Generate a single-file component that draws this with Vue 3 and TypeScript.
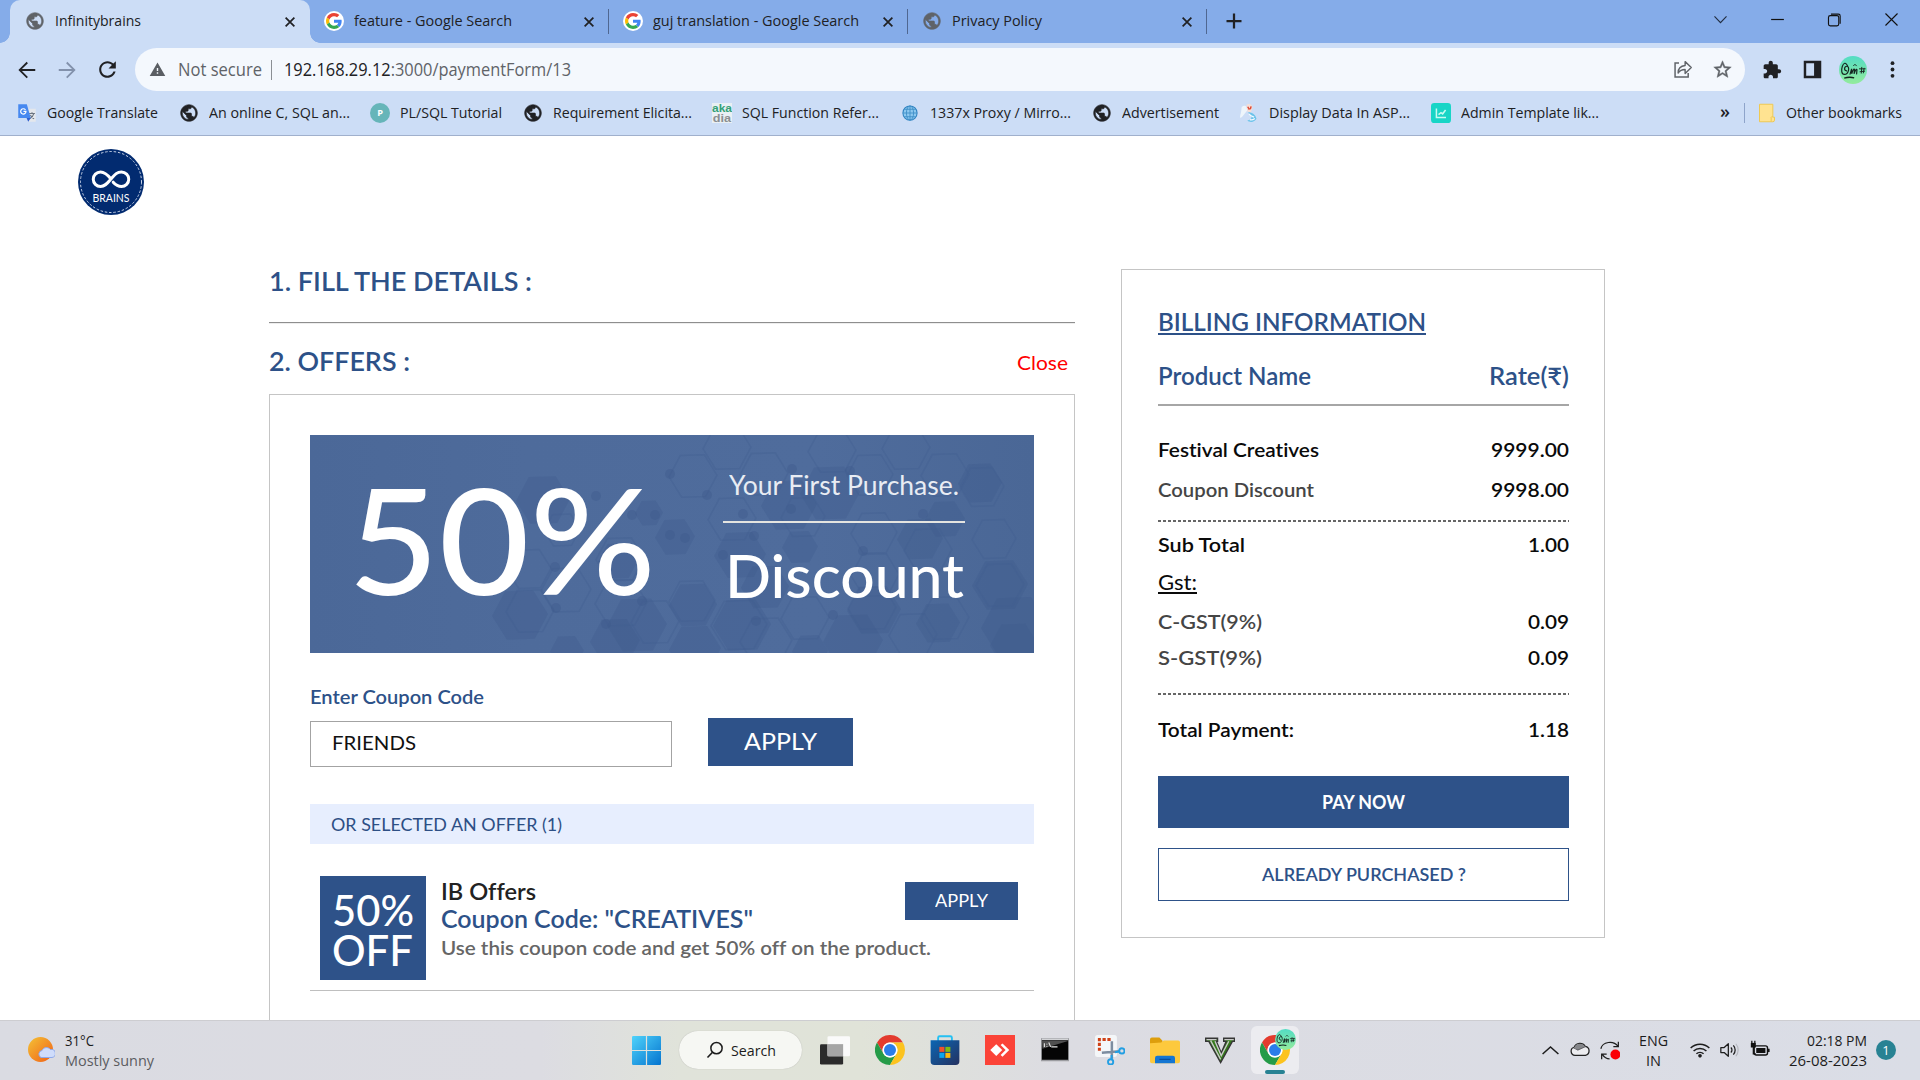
<script setup lang="ts">
type FitEl = HTMLElement

/* Stretches or condenses a line of text so that it takes the given width. */
const vFit = {
  mounted(el: FitEl, binding: { value: number }) {
    const range = document.createRange()
    range.selectNodeContents(el)
    const natural = range.getBoundingClientRect().width
    if (natural > 0) {
      el.style.display = 'inline-block'
      el.style.transformOrigin = '0 50%'
      el.style.transform = `scaleX(${binding.value / natural})`
      el.style.marginRight = `${binding.value - natural}px`
    }
  },
}

const globe =
  '<path d="M12 2C6.48 2 2 6.48 2 12s4.48 10 10 10 10-4.48 10-10S17.52 2 12 2zm-1 17.93c-3.95-.49-7-3.85-7-7.93 0-.62.08-1.21.21-1.79L9 15v1c0 1.1.9 2 2 2v1.93zm6.9-2.54c-.26-.81-1-1.39-1.9-1.39h-1v-3c0-.55-.45-1-1-1H8v-2h2c.55 0 1-.45 1-1V7h2c1.1 0 2-.9 2-2v-.41c2.93 1.19 5 4.06 5 7.41 0 2.08-.8 3.97-2.1 5.39z" fill="currentColor" stroke="currentColor" stroke-width=".7"/>'
const chrome =
  '<path d="M12 6h10.39A12 12 0 0 0 1.6 6l5.2 9A6 6 0 0 1 12 6z" fill="#e33b2e"/><path d="M6.8 15 1.6 6A12 12 0 0 0 12 24l5.2-9A6 6 0 0 1 6.8 15z" fill="#259b48"/><path d="M17.2 15 12 24A12 12 0 0 0 22.39 6H12a6 6 0 0 1 5.2 9z" fill="#fcc31e"/><circle cx="12" cy="12" r="6" fill="#fff"/><circle cx="12" cy="12" r="4.8" fill="#2b7de9"/>'

const icons: Record<string, string> = {
  globe,
  chrome,
  google:
    '<circle cx="12" cy="12" r="12" fill="#fff"/><g transform="translate(2.4 2.4) scale(.4)"><path fill="#EA4335" d="M24 9.5c3.54 0 6.71 1.22 9.21 3.6l6.85-6.85C35.9 2.38 30.47 0 24 0 14.62 0 6.51 5.38 2.56 13.22l7.98 6.19C12.43 13.72 17.74 9.5 24 9.5z"/><path fill="#4285F4" d="M46.98 24.55c0-1.57-.15-3.09-.38-4.55H24v9.02h12.94c-.58 2.96-2.26 5.48-4.78 7.18l7.73 6c4.51-4.18 7.09-10.36 7.09-17.65z"/><path fill="#FBBC05" d="M10.53 28.59A14.5 14.5 0 0 1 9.77 24c0-1.6.27-3.14.76-4.59l-7.98-6.19A23.9 23.9 0 0 0 0 24c0 3.88.92 7.54 2.56 10.78l7.97-6.19z"/><path fill="#34A853" d="M24 48c6.48 0 11.93-2.13 15.89-5.81l-7.73-6c-2.15 1.45-4.92 2.3-8.16 2.3-6.26 0-11.57-4.22-13.47-9.91l-7.98 6.19C6.51 42.62 14.62 48 24 48z"/></g>',
  close: '<path d="M4.500 4.500 19.500 19.500M19.500 4.500 4.500 19.500" stroke="#202124" stroke-width="3" fill="none"/>',
  plus: '<path d="M12 2V22M2 12H22" stroke="#202124" stroke-width="3" fill="none"/>',
  down: '<path d="M3.500 7.500 12 16.500l8.500-9" stroke="#222d40" stroke-width="1.600" fill="none"/>',
  min: '<path d="M3 12H21" stroke="#111" stroke-width="1.700"/>',
  max: '<path d="M7 4.500h10.500a2.500 2.500 0 0 1 2.500 2.500V18" stroke="#111" stroke-width="1.600" fill="none"/><rect x="3.500" y="6.500" width="14.500" height="14.500" rx="2.500" stroke="#111" stroke-width="1.600" fill="none"/>',
  exit: '<path d="M3.500 3.500 20.500 20.500M20.500 3.500 3.500 20.500" stroke="#111" stroke-width="1.600"/>',
  back: '<path d="M21 11H6.500l6.500-6.500L11.600 3.100l-9 8.900 9 8.900 1.400-1.400L6.500 13H21z" fill="currentColor"/>',
  reload:
    '<path d="M17.650 6.350C16.200 4.900 14.210 4 12 4c-4.420 0-7.990 3.580-7.990 8s3.570 8 7.990 8c3.730 0 6.840-2.550 7.730-6h-2.080c-.82 2.330-3.040 4-5.650 4-3.310 0-6-2.690-6-6s2.690-6 6-6c1.660 0 3.140.69 4.220 1.780L13 11h7V4l-2.350 2.350z" fill="#202124"/>',
  warn: '<path d="M1 21h22L12 2 1 21zm12-3h-2v-2h2v2zm0-4h-2v-4h2v4z" fill="#5a5e63"/>',
  share:
    '<path d="M8 4.500H3.500V20.500H18.500V16" stroke="#5f6368" stroke-width="1.700" fill="none"/><path d="M15 3v4.500C9.500 8 7 11.500 7 16c2-3 4.500-4 8-4v4.500L22 9.700z" stroke="#5f6368" stroke-width="1.600" fill="none" stroke-linejoin="round"/>',
  star: '<path d="M22 9.240l-7.190-.62L12 2 9.190 8.630 2 9.240l5.460 4.730L5.820 21 12 17.270 18.180 21l-1.630-7.030L22 9.240zM12 15.400l-3.760 2.270 1-4.280-3.320-2.880 4.380-.38L12 6.100l1.710 4.040 4.380.38-3.320 2.880 1 4.280L12 15.400z" fill="#5f6368" stroke="#5f6368" stroke-width=".5"/>',
  puzzle:
    '<path d="M20.500 11H19V7c0-1.100-.9-2-2-2h-4V3.500C13 2.120 11.880 1 10.500 1S8 2.120 8 3.500V5H4c-1.100 0-1.990.9-1.990 2v3.800H3.500c1.490 0 2.700 1.210 2.700 2.700s-1.210 2.700-2.700 2.700H2V20c0 1.100.9 2 2 2h3.800v-1.500c0-1.490 1.210-2.700 2.700-2.700 1.490 0 2.700 1.210 2.700 2.700V22H17c1.100 0 2-.9 2-2v-4h1.500c1.380 0 2.500-1.120 2.500-2.500S21.880 11 20.500 11z" fill="#202124"/>',
  panel: '<path d="M2 2h20v20H2zM4.800 4.800v14.400h9V4.800z" fill="#202124" fill-rule="evenodd"/>',
  dots: '<circle cx="12" cy="4" r="2.400" fill="#202124"/><circle cx="12" cy="12" r="2.400" fill="#202124"/><circle cx="12" cy="20" r="2.400" fill="#202124"/>',
  avatar:
    '<defs><linearGradient id="av" x1="0" y1="0" x2="0" y2="1"><stop offset="0" stop-color="#53dcc4"/><stop offset="1" stop-color="#93eb9c"/></linearGradient></defs><circle cx="12" cy="12" r="12" fill="url(#av)"/><path d="M7.500 9C4-.0 -.5 15.800 4.500 15.800c4 0 5-7 2.200-7-2.200 0-2.800 3.600-.2 4M9.500 15.500l1.300-4.500.1 4.200c.8-2.900 2.200-4.900 2.400-3.700l-.4 3.800c1-2.900 2.100-4.700 2.500-3.500l-.3 3.500" stroke="#15241f" stroke-width="1" fill="none" stroke-linecap="round"/><path d="M4.500 19c3-.9 6-.9 8.500-.2" stroke="#15241f" stroke-width="1.200" fill="none"/><path d="M12.500 8.300l1.200-1.200 1.200 1.300M17.500 11h5M19.500 9.700l-.4 5M21.500 10.500l-.6 4M18 13.500l4-.5" stroke="#15241f" stroke-width=".8" fill="none" stroke-linecap="round"/>',
  translate:
    '<path d="M10 7h12.500v15.500H14z" fill="#e4e7ec"/><path d="M14.500 12.500h7M18 11v1.500M20 13c-.7 3-3 5-5 6M16 14.500c1 2 2.500 3.500 4.500 4.500" stroke="#6b7480" stroke-width="1.300" fill="none"/><path d="M1.500 1.500h10.300l4.700 16.500h-15z" fill="#4688f0"/><path d="M11.500 18h5l-3 4.500z" fill="#3060cf"/><path d="M10.200 8.200A3.200 3.200 0 1 0 10.800 10H7.800" stroke="#fff" stroke-width="1.400" fill="none"/>',
  pCircle: '<circle cx="12" cy="12" r="12" fill="#66b5b9"/><text x="12" y="16" text-anchor="middle" font-family="Open Sans, sans-serif" font-weight="700" font-size="11" fill="#fff">P</text>',
  aka: '<rect width="24" height="24" fill="#e9f0f4"/><text x="0" y="10.500" font-family="Liberation Sans, sans-serif" font-weight="700" font-size="14" fill="#34a178" textLength="24" lengthAdjust="spacingAndGlyphs">aka</text><text x="1" y="22.500" font-family="Liberation Sans, sans-serif" font-weight="700" font-size="13" fill="#8b8f92" textLength="22" lengthAdjust="spacingAndGlyphs">dia</text>',
  world:
    '<circle cx="12" cy="12" r="8.500" fill="#8cc8ef" stroke="#2f83c1" stroke-width="1.300"/><path d="M3.500 12h17M12 3.500v17M5 7.500h14M5 16.500h14" stroke="#3f8fc8" stroke-width="1.100"/><ellipse cx="12" cy="12" rx="4.300" ry="8.500" fill="none" stroke="#3f8fc8" stroke-width="1.100"/>',
  figure:
    '<path d="M3 6c0-3 5-4 6-1l1 4c-3 3-5 7-8 9C0 17 3 12 3 6z" fill="#eef5fb"/><path d="M9 2c4-2 7 0 7 4l-2 6-4-2z" fill="#f5ddd6"/><path d="M10.500 4.500 12.500 8M14.500 4l-1 3.500" stroke="#dd4a36" stroke-width="1.800"/><path d="M11 11c5 0 9 3 10 8-2 4-8 5-11 2 3-1 5-2 5-4s-3-3-4-6z" fill="#6cc3ea"/><path d="M12 13c2 3 4 3 6 4M13 20c2 .5 4 0 6-1.500" stroke="#f3fafe" stroke-width="1.500" fill="none"/>',
  chart: '<rect width="24" height="24" rx="4" fill="#18d5c6"/><path d="M6.500 6.500v11h11.500M9 14l3-2.500 2 1.500 3.500-4.500" stroke="#c8fbf2" stroke-width="1.800" fill="none"/>',
  folderS: '<path d="M3 1.500h16V17h2v3.500a2 2 0 0 1-2 2H3z" fill="#ffe391"/><path d="M3 1.500h16V17h2v3.500a2 2 0 0 1-2 2H3zM17 22v-4a1 1 0 0 1 2-1" stroke="#efc953" stroke-width="1.200" fill="none"/>',
  weather:
    '<defs><linearGradient id="sun" x1="0" y1="0" x2="1" y2="1"><stop offset="0" stop-color="#f4c236"/><stop offset="1" stop-color="#f05f16"/></linearGradient></defs><circle cx="12.500" cy="12.500" r="12.500" fill="url(#sun)"/><path d="M13 20.500a3.700 3.700 0 0 1 1-7 5 5 0 0 1 8.500-1 4 4 0 0 1 1.500 8z" fill="#cfdcfb" stroke="#8fa9ea" stroke-width="1"/>',
  windows:
    '<defs><linearGradient id="wn" x1="0" y1="0" x2="1" y2="1"><stop offset="0" stop-color="#4fd3fb"/><stop offset="1" stop-color="#0474cf"/></linearGradient></defs><path d="M0 1a1 1 0 0 1 1-1h10.500v11.500H0zM12.500 0H23a1 1 0 0 1 1 1v10.500H12.500zM0 12.500h11.500V24H1a1 1 0 0 1-1-1zM12.500 12.500H24V23a1 1 0 0 1-1 1H12.500z" fill="url(#wn)"/>',
  search: '<circle cx="14" cy="9.500" r="7.500" stroke="#1c1c1c" stroke-width="2" fill="none"/><path d="M8.700 15 2 22" stroke="#1c1c1c" stroke-width="2.200"/>',
  taskview:
    '<rect x="0" y="7.300" width="18.500" height="16.200" rx="1" fill="#2b2b2b"/><rect x="6" y="1" width="18" height="16" rx="1" fill="#fafafa"/><rect x="6" y="7.300" width="12.500" height="9.700" fill="#a5a5a5"/>',
  store:
    '<path d="M6.500 6V2.200A1.200 1.200 0 0 1 7.700 1h8.600a1.200 1.200 0 0 1 1.200 1.200V6" stroke="#25c0f2" stroke-width="1.500" fill="none"/><defs><linearGradient id="st" x1="0" y1="0" x2="1" y2="1"><stop offset="0" stop-color="#0b66b4"/><stop offset="1" stop-color="#253260"/></linearGradient></defs><path d="M.5 4.200h23V21a3 3 0 0 1-3 3h-17a3 3 0 0 1-3-3z" fill="url(#st)"/><path d="M7.500 9.500h4v4h-4z" fill="#f1512a"/><path d="M12.300 9.500h4v4h-4z" fill="#80bb10"/><path d="M7.500 14.300h4v4h-4z" fill="#0aa5ee"/><path d="M12.300 14.300h4v4h-4z" fill="#fdb90b"/>',
  anydesk: '<rect width="24" height="24" fill="#fb4338"/><path d="M9 7.300 13.800 12 9 16.700 4.200 12z" fill="#fff"/><path d="M12.500 8 14 6.700 19.400 12 14 17.300 12.500 16l4-4z" fill="#fff"/>',
  cmd: '<rect x=".8" y="2.500" width="22.400" height="18.500" fill="#9c9da1"/><rect x="1.500" y="3.800" width="21" height="16" fill="#050505"/><path d="M1.500 4.800h21L2 11z" fill="#505050"/><path d="M1.500 2.900h21v1.300h-21z" fill="#d2d3d6"/><path d="M3.500 6.500v3M5.500 7v.5M5.500 9v.5M7 6l1.500 3.500M9 9.500h5" stroke="#e4e4e4" stroke-width=".9"/>',
  snip: '<rect x="0" y="0" width="17.500" height="17.500" rx="2" fill="#f4f6f8"/><path d="M12.500 3.500h-9v9" stroke="#cf4117" stroke-width="2.400" stroke-dasharray="2.600 1.300" fill="none"/><path d="M13.500 5v14M5.500 14.200 20 13" stroke="#7d8da0" stroke-width="2"/><circle cx="21.500" cy="12.700" r="2.100" stroke="#239fe3" stroke-width="1.500" fill="none"/><circle cx="12.500" cy="21.500" r="2.100" stroke="#239fe3" stroke-width="1.500" fill="none"/><path d="M16 13.800l4-.8M13.300 16v4" stroke="#239fe3" stroke-width="1.600"/>',
  folder:
    '<path d="M0 3.500A1.500 1.500 0 0 1 1.500 2H7.500l2.500 2.500V8H0z" fill="#dd9e0c"/><path d="M0 6.500 9 6l2-1.700h11.500A1.500 1.500 0 0 1 24 5.800V21a1.500 1.500 0 0 1-1.500 1.500h-21A1.500 1.500 0 0 1 0 21z" fill="#fdc93d"/><path d="M4 22.500v-4.200A1.800 1.800 0 0 1 5.800 16.500h12.400a1.800 1.800 0 0 1 1.800 1.800v4.200z" fill="#1576d2"/><path d="M7.500 19.500h9" stroke="#0a4f9d" stroke-width="1"/>',
  vim: '<path d="M.5 2.500H10V5H9l4 9.500L17 5h-2V2.500h8.500V5H22L12.500 22 3 5H.5z" fill="#347a1b" stroke="#363636" stroke-width="1.200"/><path d="M1.200 3.700h8M15.500 3.700h7.500M4.500 4.500l8 15M8 5l5 11.500L19 5" stroke="#c9c9c9" stroke-width="1.100" fill="none"/>',
  up: '<path d="M2 16.500 12 7.500l10 9" stroke="#1d1d1d" stroke-width="1.900" fill="none"/>',
  cloud: '<path d="M6 18.500a5 5 0 0 1-1-9.800 7.500 7.500 0 0 1 13.300-1A5.500 5.500 0 0 1 18.500 18.500z" fill="#ededf0" stroke="#222" stroke-width="1.500"/><path d="M5 9a7.500 7.500 0 0 1 13.300-1l-9 4.500z" fill="#85868a"/><path d="M4 9.500 9.500 12 19 7.800" stroke="#55565a" stroke-width="1" fill="none"/>',
  sync: '<path d="M1 10.500C3 2 16 0 21.500 7.500M22 2v6h-6M2 23v-6h6M3 17.500c2 3 5 5 8.500 5" stroke="#1d1d1d" stroke-width="1.500" fill="none"/><circle cx="18.500" cy="17.500" r="6" fill="#fb0006"/>',
  wifi: '<path d="M.8 9.700a16 16 0 0 1 22.400 0M4.300 13.300a11 11 0 0 1 15.400 0M7.700 16.600a6.200 6.200 0 0 1 8.600 0" stroke="#1d1d1d" stroke-width="1.800" fill="none"/><circle cx="12" cy="19" r="2.200" fill="#1d1d1d"/>',
  speaker: '<path d="M1 9h4l5-4.500v15L5 15H1z" stroke="#1d1d1d" stroke-width="1.500" fill="none" stroke-linejoin="round"/><path d="M13 9a4 4 0 0 1 0 6M16 6.500a8 8 0 0 1 0 11" stroke="#1d1d1d" stroke-width="1.500" fill="none"/><path d="M19 4.500a11.500 11.500 0 0 1 0 15" stroke="#b4b6bd" stroke-width="1.300" fill="none"/>',
  battery: '<rect x="5" y="7" width="16" height="11" rx="2.500" stroke="#111" stroke-width="1.700" fill="none"/><path d="M7.500 9.500h11v6h-11zM21.500 10.500h2v4h-2z" fill="#111"/><path d="M1 3.500h6v5.500H1z" fill="#111"/><path d="M2.200 1v3M5.800 1v3M4 8.500v8h3" stroke="#111" stroke-width="1.500" fill="none"/>',
}

const tabs = [
  { icon: 'globe', label: 'Infinitybrains', w: 86 },
  { icon: 'google', label: 'feature - Google Search', w: 158 },
  { icon: 'google', label: 'guj translation - Google Search', w: 206 },
  { icon: 'globe', label: 'Privacy Policy', w: 90 },
]

const bookmarks = [
  { icon: 'translate', label: 'Google Translate', w: 111 },
  { icon: 'globe', label: 'An online C, SQL an...', w: 141 },
  { icon: 'pCircle', label: 'PL/SQL Tutorial', w: 102 },
  { icon: 'globe', label: 'Requirement Elicita...', w: 139 },
  { icon: 'aka', label: 'SQL Function Refer...', w: 137 },
  { icon: 'world', label: '1337x Proxy / Mirro...', w: 141 },
  { icon: 'globe', label: 'Advertisement', w: 97 },
  { icon: 'figure', label: 'Display Data In ASP...', w: 141 },
  { icon: 'chart', label: 'Admin Template lik...', w: 138 },
]

const windowButtons = ['down', 'min', 'max', 'exit']
const taskIcons = ['taskview', 'chrome', 'store', 'anydesk', 'cmd', 'snip', 'folder', 'vim']

/* Flat-top hexagons of the banner: centre x, centre y, radius. */
const solidHexes = [
  [233, 65, 27], [339, 78, 14], [365, 102, 20], [308, 126, 20], [210, 180, 28], [327, 190, 30], [305, 206, 25],
  [432, 190, 29], [383, 170, 24], [479, 70, 28], [520, 58, 30], [490, 112, 18], [430, 120, 26], [610, 104, 23],
  [635, 84, 20], [670, 48, 22], [564, 175, 27], [543, 206, 30], [628, 188, 22], [690, 150, 28], [705, 192, 34],
  [257, 216, 17], [385, 214, 26], [500, 216, 18], [704, 210, 24], [455, 152, 24],
]
const lineHexes = [
  [417, 13, 24], [383, 41, 24], [454, 39, 24], [522, 16, 24], [596, 13, 24], [560, 40, 23], [635, 40, 24],
  [672, 52, 22], [564, 98, 23], [422, 84, 24], [565, 140, 24], [493, 82, 22], [618, 115, 24], [684, 104, 22],
  [219, 134, 22], [256, 155, 25], [220, 176, 24], [382, 166, 23], [345, 187, 24], [311, 168, 26], [310, 124, 24],
  [252, 95, 18], [429, 190, 28], [495, 183, 24], [456, 206, 26], [562, 173, 24], [603, 200, 24], [635, 183, 24], [690, 150, 24],
]
const dots = [
  [360, 39, 5], [482, 34, 5], [540, 36, 5], [433, 79, 5], [397, 60, 5], [286, 61, 5], [345, 80, 5], [322, 80, 5],
  [360, 100, 5], [375, 103, 5], [245, 132, 5], [246, 173, 5], [296, 189, 5], [332, 166, 5], [413, 120, 5],
  [523, 180, 5], [553, 116, 5], [613, 79, 5], [444, 101, 5], [446, 186, 5], [481, 74, 5],
]
const hex = ([cx, cy, r]: number[]) =>
  [0, 1, 2, 3, 4, 5]
    .map((i) => {
      const a = ((i * 60 - 2) * Math.PI) / 180
      return `${(cx + r * Math.cos(a)).toFixed(1)},${(cy + r * Math.sin(a)).toFixed(1)}`
    })
    .join(' ')
</script>

<template>
  <div class="screen">
    <div class="strip">
      <div v-for="(tab, i) in tabs" :key="tab.label" class="tab" :class="{ active: i === 0 }">
        <svg class="fav" viewBox="0 0 24 24" v-html="icons[tab.icon]" />
        <span class="tab-label"><span v-fit="tab.w">{{ tab.label }}</span></span>
        <svg class="tab-close" viewBox="0 0 24 24" v-html="icons.close" />
      </div>
      <svg class="new-tab" viewBox="0 0 24 24" v-html="icons.plus" />
      <div class="win-buttons">
        <span v-for="b in windowButtons" :key="b" class="win-button">
          <svg viewBox="0 0 24 24" v-html="icons[b]" />
        </span>
      </div>
    </div>

    <div class="toolbar">
      <svg class="nav" viewBox="0 0 24 24" v-html="icons.back" />
      <svg class="nav forward" viewBox="0 0 24 24" v-html="icons.back" />
      <svg class="nav reload" viewBox="0 0 24 24" v-html="icons.reload" />
      <div class="omnibox">
        <svg class="warn" viewBox="0 0 24 24" v-html="icons.warn" />
        <span class="insecure"><span v-fit="84">Not secure</span></span>
        <i class="omni-sep" />
        <span class="url"><span v-fit="287"><b>192.168.29.12</b>:3000/paymentForm/13</span></span>
        <svg class="share" viewBox="0 0 24 24" v-html="icons.share" />
        <svg class="star" viewBox="0 0 24 24" v-html="icons.star" />
      </div>
      <svg class="ext" viewBox="0 0 24 24" v-html="icons.puzzle" />
      <svg class="panel" viewBox="0 0 24 24" v-html="icons.panel" />
      <svg class="avatar" viewBox="0 0 24 24" v-html="icons.avatar" />
      <svg class="dots" viewBox="0 0 24 24" v-html="icons.dots" />
    </div>

    <div class="bookmarks">
      <div v-for="b in bookmarks" :key="b.label" class="bookmark">
        <svg class="bm-icon" viewBox="0 0 24 24" v-html="icons[b.icon]" />
        <span class="bm-label"><span v-fit="b.w">{{ b.label }}</span></span>
      </div>
      <span class="more">»</span>
      <i class="bm-sep" />
      <svg class="bm-icon" viewBox="0 0 24 24" v-html="icons.folderS" />
      <span class="other"><span v-fit="116">Other bookmarks</span></span>
    </div>

    <main class="page">
      <header class="page-head">
        <svg class="logo" viewBox="0 0 66 66">
          <circle cx="33" cy="33" r="33" fill="#022b70" />
          <circle cx="33" cy="33" r="30.500" fill="none" stroke="#c9d4e8" stroke-width="1" stroke-dasharray="2.500 1.800" />
          <path
            d="M33 30c-4-5-6.500-7-10.500-7a7 7 0 0 0 0 14.500c5 0 7-3.500 10.500-7.500s5.500-7 10.500-7a7 7 0 0 1 0 14.500c-4 0-6-1.700-8.300-4.300"
            fill="none" stroke="#fff" stroke-width="3" stroke-linecap="round"
          />
          <text x="14.500" y="52.500" font-size="10.500" textLength="37" lengthAdjust="spacingAndGlyphs" fill="#fff">BRAINS</text>
        </svg>
      </header>

      <div class="columns">
        <section class="left">
          <h2 class="step"><span v-fit="263">1. FILL THE DETAILS :</span></h2>
          <hr />
          <div class="offers-head">
            <h2 class="step"><span v-fit="141">2. OFFERS :</span></h2>
            <a class="close"><span v-fit="51">Close</span></a>
          </div>
          <div class="offers">
            <div class="banner">
              <svg class="pattern" viewBox="0 0 724 218">
                <g fill="#3f5b8c" fill-opacity=".32">
                  <polygon v-for="(p, i) in solidHexes" :key="i" :points="hex(p)" />
                </g>
                <g fill="none" stroke="#425e90" stroke-opacity=".38" stroke-width="1.500">
                  <polygon v-for="(p, i) in lineHexes" :key="i" :points="hex(p)" />
                </g>
                <g fill="#3f5b8c" fill-opacity=".4">
                  <circle v-for="(p, i) in dots" :key="i" :cx="p[0]" :cy="p[1]" :r="p[2]" />
                </g>
              </svg>
              <div class="percent"><span v-fit="308">50%</span></div>
              <div class="pitch">
                <div class="first"><span v-fit="230">Your First Purchase.</span></div>
                <div class="discount"><span v-fit="239">Discount</span></div>
              </div>
            </div>

            <div class="label"><span v-fit="174">Enter Coupon Code</span></div>
            <div class="form">
              <div class="field"><span v-fit="84">FRIENDS</span></div>
              <div class="button big"><span v-fit="73">APPLY</span></div>
            </div>

            <div class="bar"><span v-fit="231">OR SELECTED AN OFFER (1)</span></div>

            <div class="offer">
              <div class="tile">
                <div><span v-fit="82">50%</span></div>
                <div><span v-fit="81">OFF</span></div>
              </div>
              <div class="offer-text">
                <div class="o1"><span v-fit="95">IB Offers</span></div>
                <div class="o2"><span v-fit="312">Coupon Code: "CREATIVES"</span></div>
                <div class="o3"><span v-fit="490">Use this coupon code and get 50% off on the product.</span></div>
              </div>
              <div class="button small"><span v-fit="53">APPLY</span></div>
            </div>
          </div>
        </section>

        <aside class="billing">
          <div class="title"><span v-fit="268">BILLING INFORMATION</span></div>
          <div class="row head"><span v-fit="153">Product Name</span><span v-fit="80">Rate(₹)</span></div>
          <div class="rule" />
          <div class="row r1"><span v-fit="161">Festival Creatives</span><span v-fit="78">9999.00</span></div>
          <div class="row r2"><span v-fit="156" class="soft">Coupon Discount</span><span v-fit="78">9998.00</span></div>
          <div class="dash d1" />
          <div class="row r3"><span v-fit="87">Sub Total</span><span v-fit="41">1.00</span></div>
          <div class="row gst"><span v-fit="39">Gst:</span></div>
          <div class="row r4"><span v-fit="104" class="soft">C-GST(9%)</span><span v-fit="41">0.09</span></div>
          <div class="row r5"><span v-fit="104" class="soft">S-GST(9%)</span><span v-fit="41">0.09</span></div>
          <div class="dash d2" />
          <div class="row r6"><span v-fit="136">Total Payment:</span><span v-fit="41">1.18</span></div>
          <div class="pay"><span v-fit="83">PAY NOW</span></div>
          <div class="already"><span v-fit="204">ALREADY PURCHASED ?</span></div>
        </aside>
      </div>
    </main>

    <footer class="taskbar">
      <div class="weather">
        <svg viewBox="0 0 27 26" v-html="icons.weather" />
        <div class="w-text">
          <div><span v-fit="29">31°C</span></div>
          <div class="sub"><span v-fit="89">Mostly sunny</span></div>
        </div>
      </div>
      <svg class="start" viewBox="0 0 24 24" v-html="icons.windows" />
      <div class="pill">
        <svg viewBox="0 0 24 24" v-html="icons.search" />
        <span v-fit="45">Search</span>
      </div>
      <div class="task-icons">
        <span v-for="t in taskIcons" :key="t" class="cell"><svg viewBox="0 0 24 24" v-html="icons[t]" /></span>
        <span class="cell current">
          <svg viewBox="0 0 24 24" v-html="icons.chrome" />
          <svg class="mini" viewBox="0 0 24 24" v-html="icons.avatar" />
          <i class="underline" />
        </span>
      </div>
      <div class="tray">
        <span class="t-cell"><svg class="s16" viewBox="0 0 24 24" v-html="icons.up" /></span>
        <span class="t-cell"><svg viewBox="0 0 24 24" v-html="icons.cloud" /></span>
        <span class="t-cell"><svg viewBox="0 0 24 24" v-html="icons.sync" /></span>
        <div class="lang"><div><span v-fit="29">ENG</span></div><div><span v-fit="15">IN</span></div></div>
        <span class="t-cell"><svg viewBox="0 0 24 24" v-html="icons.wifi" /></span>
        <span class="t-cell"><svg viewBox="0 0 24 24" v-html="icons.speaker" /></span>
        <span class="t-cell"><svg viewBox="0 0 24 24" v-html="icons.battery" /></span>
        <div class="clock"><div><span v-fit="60">02:18 PM</span></div><div><span v-fit="78">26-08-2023</span></div></div>
        <span class="badge">1</span>
      </div>
    </footer>
  </div>
</template>

<style>
body {
  overflow: hidden;
}
</style>

<style scoped>
.screen {
  width: 1920px;
  height: 1080px;
  display: flex;
  flex-direction: column;
  overflow: hidden;
  background: #fff;
  font-family: "Open Sans", "Noto Sans", sans-serif;
  font-size: 15px;
  font-variant-ligatures: none;
  color: #202124;
  white-space: nowrap;
}
svg {
  display: block;
  flex: none;
}
.strip {
  height: 43px;
  flex: none;
  display: flex;
  background: #85ace9;
}
.tab {
  box-sizing: border-box;
  width: 299px;
  display: flex;
  align-items: center;
  padding: 0 13px 2px 14px;
  position: relative;
}
.tab:not(.active)::after {
  content: "";
  position: absolute;
  right: 0;
  top: 9px;
  width: 1px;
  height: 25px;
  background: #4f6791;
}
.tab.active {
  margin-left: 10px;
  width: 300px;
  padding-left: 15px;
  background: #ccddf6;
  border-radius: 10px 10px 0 0;
}
.tab.active::before,
.tab.active::after {
  content: "";
  position: absolute;
  bottom: 0;
  width: 10px;
  height: 10px;
}
.tab.active::before {
  left: -10px;
  background: radial-gradient(circle at 0 0, #85ace9 9.500px, #ccddf6 10px);
}
.tab.active::after {
  right: -10px;
  background: radial-gradient(circle at 100% 0, #85ace9 9.500px, #ccddf6 10px);
}
.fav {
  width: 20px;
  height: 20px;
  color: #5f6368;
}
.tab-label {
  flex: 1;
  margin-left: 10px;
  padding-bottom: 1px;
  line-height: 38px;
}
.tab-close {
  width: 14px;
  height: 14px;
  position: relative;
  top: 1px;
}
.new-tab {
  width: 18px;
  height: 18px;
  margin: 12px 0 0 18px;
}
.win-buttons {
  display: flex;
  margin-left: auto;
  height: 38px;
}
.win-button {
  width: 57px;
  display: flex;
  align-items: center;
  justify-content: center;
}
.win-button svg {
  width: 17px;
  height: 17px;
}
.toolbar {
  height: 53px;
  flex: none;
  display: flex;
  align-items: center;
  background: #ccddf6;
}
.nav {
  width: 22px;
  height: 22px;
  margin-left: 16px;
}
.forward {
  margin-left: 18px;
  transform: scaleX(-1);
  color: #8291ab;
}
.reload {
  width: 25px;
  height: 25px;
  margin-left: 17px;
}
.omnibox {
  width: 1610px;
  height: 43px;
  margin-left: 15px;
  border-radius: 22px;
  display: flex;
  align-items: center;
  background: #f4f8fd;
  font-size: 17.500px;
  line-height: 30px;
  color: #5f6368;
}
.warn {
  width: 17px;
  height: 17px;
  margin-left: 14px;
}
.insecure {
  margin-left: 12px;
  padding-bottom: 2px;
}
.omni-sep {
  width: 1px;
  height: 20px;
  margin: 0 12px 0 9px;
  background: #8b8f94;
}
.url {
  padding-bottom: 2px;
}
.url b {
  font-weight: 400;
  color: #202124;
}
.share {
  width: 21px;
  height: 21px;
  margin-left: auto;
}
.star {
  width: 21px;
  height: 21px;
  margin: 0 12px 0 19px;
}
.ext {
  width: 20px;
  height: 20px;
  margin-left: 17px;
}
.panel {
  width: 21px;
  height: 21px;
  margin-left: 20px;
}
.avatar {
  width: 28px;
  height: 28px;
  margin-left: 16px;
}
.dots {
  width: 19px;
  height: 19px;
  margin-left: 16px;
}
.bookmarks {
  box-sizing: border-box;
  height: 40px;
  flex: none;
  display: flex;
  align-items: center;
  padding: 0 0 6px 17px;
  background: #ccddf6;
  border-bottom: 1px solid #a0b0cc;
}
.bookmark {
  display: flex;
  align-items: center;
  margin-right: 20.600px;
}
.bm-icon {
  width: 20px;
  height: 20px;
}
.bm-label {
  margin-left: 10px;
  padding-bottom: 2px;
  line-height: 28px;
}
.more {
  margin-left: auto;
  font-size: 18px;
  font-weight: 600;
  line-height: 28px;
  padding-bottom: 4px;
}
.bm-sep {
  width: 1px;
  height: 20px;
  margin: 0 12px 0 14px;
  background: #8ea4ca;
}
.other {
  margin: 0 18px 0 9px;
  padding-bottom: 2px;
}
.page {
  height: 884px;
  flex: none;
  overflow: hidden;
  font-family: Lato, "Open Sans", sans-serif;
}
.page-head {
  box-sizing: border-box;
  height: 129px;
  padding: 13px 0 0 78px;
}
.logo {
  width: 66px;
  height: 66px;
}
.columns {
  display: flex;
  align-items: flex-start;
  padding-left: 269px;
}
.left {
  width: 806px;
}
.step {
  box-sizing: border-box;
  height: 30px;
  margin: 0;
  padding-top: 1px;
  font-size: 27px;
  line-height: 30px;
  font-weight: 600;
  color: #2d5188;
}
hr {
  height: 1px;
  margin: 27px 0 21px;
  border: 0;
  border-top: 1px solid #8e8e8e;
  background: #ededed;
}
.offers-head {
  height: 30px;
  display: flex;
  justify-content: space-between;
}
.close {
  margin-right: 7px;
  padding-top: 4px;
  font-size: 19.500px;
  line-height: 27px;
  color: #f00;
}
.offers {
  box-sizing: border-box;
  height: 700px;
  margin-top: 19px;
  padding: 40px;
  border: 1px solid #c5c5c5;
}
.banner {
  position: relative;
  height: 218px;
  display: flex;
  background: linear-gradient(90deg, #4b6898, #4e6b9b 30%, #4f6c9c 70%, #4a6796);
  color: #fff;
}
.pattern {
  position: absolute;
  width: 724px;
  height: 218px;
}
.percent,
.pitch {
  position: relative;
}
.percent {
  width: 413px;
  box-sizing: border-box;
  padding-left: 38px;
  font-size: 147px;
  font-weight: 500;
  line-height: 206px;
}
.pitch {
  width: 242px;
}
.first {
  height: 86px;
  padding-left: 6px;
  font-size: 26px;
  line-height: 101px;
  color: #e8ecf3;
  border-bottom: 2px solid #e4e4e0;
}
.discount {
  padding-left: 2px;
  font-size: 60px;
  font-weight: 500;
  line-height: 104px;
}
.label {
  margin-top: 32px;
  font-size: 19.500px;
  font-weight: 600;
  line-height: 24px;
  color: #2d5188;
}
.form {
  height: 49px;
  margin-top: 9px;
  display: flex;
  align-items: flex-start;
}
.field {
  box-sizing: border-box;
  width: 362px;
  height: 46px;
  margin-top: 3px;
  padding-left: 21px;
  border: 1px solid #a3a3a3;
  font-size: 19.500px;
  line-height: 42px;
  color: #111;
}
.button {
  flex: none;
  background: #2e5289;
  color: #fff;
  text-align: center;
}
.big {
  width: 145px;
  height: 48px;
  margin-left: 36px;
  font-size: 24px;
  line-height: 46px;
}
.bar {
  height: 40px;
  margin-top: 37px;
  padding-left: 21px;
  font-size: 17.500px;
  line-height: 41px;
  color: #2d4f85;
  background: #e7eefe;
}
.offer {
  margin-top: 32px;
  padding: 0 16px 10px 10px;
  display: flex;
  align-items: flex-start;
  border-bottom: 1px solid #bfbfbf;
}
.tile {
  flex: none;
  box-sizing: border-box;
  width: 106px;
  height: 104px;
  padding: 14px 0 0 12px;
  background: #2e5289;
  color: #fff;
  font-size: 42px;
  font-weight: 500;
  line-height: 40px;
}
.offer-text {
  flex: none;
  width: 464px;
  margin-left: 15px;
  padding-top: 2px;
  font-weight: 600;
}
.o1 {
  font-size: 22.500px;
  line-height: 27px;
  color: #222;
}
.o2 {
  font-size: 24px;
  line-height: 27px;
  color: #2d5188;
}
.o3 {
  margin-top: 3px;
  font-size: 19.500px;
  line-height: 26px;
  color: #666;
}
.small {
  width: 113px;
  height: 38px;
  margin: 6px 0 0 0;
  font-size: 17.500px;
  line-height: 37px;
}
.billing {
  box-sizing: border-box;
  width: 484px;
  height: 669px;
  margin: 4px 0 0 46px;
  padding: 36px 35px 0 36px;
  border: 1px solid #c5c5c5;
  color: #0a0a0a;
}
.title {
  height: 30px;
  font-size: 25px;
  font-weight: 600;
  line-height: 30px;
  color: #2d5188;
}
.title span,
.gst span {
  text-decoration: underline;
  text-decoration-thickness: 2px;
  text-underline-offset: 2px;
  text-decoration-skip-ink: none;
}
.row {
  display: flex;
  justify-content: space-between;
  font-size: 19.500px;
  font-weight: 600;
  line-height: 28px;
}
.head {
  margin-top: 25px;
  font-size: 24px;
  font-weight: 600;
  line-height: 30px;
  color: #2d5188;
}
.rule {
  height: 2px;
  margin-top: 13px;
  background: #a6a6a6;
}
.soft {
  color: #454545;
}
.dash {
  height: 2px;
  background: repeating-linear-gradient(90deg, #666 0 3px, #fff 3px 5px);
}
.r1 {
  margin-top: 30px;
}
.r2 {
  margin-top: 12px;
}
.d1 {
  margin-top: 16px;
}
.r3,
.gst {
  margin-top: 9px;
}
.gst {
  font-size: 21px;
  font-weight: 400;
}
.r4 {
  margin-top: 12px;
}
.r5 {
  margin-top: 8px;
}
.d2,
.r6 {
  margin-top: 21px;
}
.pay,
.already {
  box-sizing: border-box;
  text-align: center;
}
.pay {
  height: 52px;
  margin-top: 32px;
  font-size: 18px;
  font-weight: 700;
  line-height: 53px;
  color: #fff;
  background: #2e5289;
}
.already {
  height: 53px;
  margin-top: 20px;
  border: 1px solid #2e5289;
  font-size: 18px;
  font-weight: 600;
  line-height: 51px;
  color: #2d5188;
}
.taskbar {
  box-sizing: border-box;
  height: 60px;
  flex: none;
  display: flex;
  align-items: center;
  padding-bottom: 1px;
  border-top: 1px solid #cdcdd1;
  background: linear-gradient(90deg, #dadbe2 0, #dcdce2 540px, #e0e3da 680px, #e0e3d8 860px, #dcdce2 1060px, #dadde6 1920px);
  line-height: 20px;
  color: #1c1c1c;
}
.weather {
  box-sizing: border-box;
  width: 632px;
  padding-left: 28px;
  display: flex;
  align-items: center;
}
.weather svg {
  width: 27px;
  height: 26px;
}
.w-text {
  margin-left: 10px;
}
.sub {
  color: #5b5b5f;
}
.start {
  width: 29px;
  height: 29px;
}
.pill {
  box-sizing: border-box;
  width: 123px;
  height: 38px;
  margin-left: 18px;
  padding-left: 27px;
  display: flex;
  align-items: center;
  border-radius: 19px;
  background: #f6f7f3;
  box-shadow: 0 0 1px #a9aaa6;
}
.pill svg {
  width: 18px;
  height: 18px;
  margin-right: 7px;
}
.task-icons {
  display: flex;
  margin-left: 5px;
}
.cell {
  width: 55px;
  height: 48px;
  display: flex;
  align-items: center;
  justify-content: center;
  position: relative;
}
.cell svg {
  width: 30px;
  height: 30px;
}
.current {
  width: 48px;
  margin-left: 4px;
  border-radius: 6px;
  background: #ececf0;
}
.cell .mini {
  position: absolute;
  left: 24px;
  top: 3px;
  width: 21px;
  height: 21px;
}
.underline {
  position: absolute;
  left: 14px;
  bottom: 0;
  width: 20px;
  height: 4px;
  border-radius: 2px;
  background: #288293;
}
.tray {
  margin-left: auto;
  padding-right: 24px;
  display: flex;
  align-items: center;
}
.t-cell {
  width: 30px;
  display: flex;
  justify-content: center;
}
.t-cell svg {
  width: 20px;
  height: 20px;
}
.t-cell .s16 {
  width: 19px;
  height: 19px;
}
.lang {
  width: 56px;
  padding-right: 4px;
  text-align: center;
}
.clock {
  width: 92px;
  text-align: right;
}
.badge {
  width: 20px;
  height: 20px;
  margin-left: 9px;
  border-radius: 50%;
  background: #288293;
  color: #fff;
  font-size: 13px;
  text-align: center;
}
.clock,
.lang,
.w-text {
  padding-bottom: 1px;
}
</style>
